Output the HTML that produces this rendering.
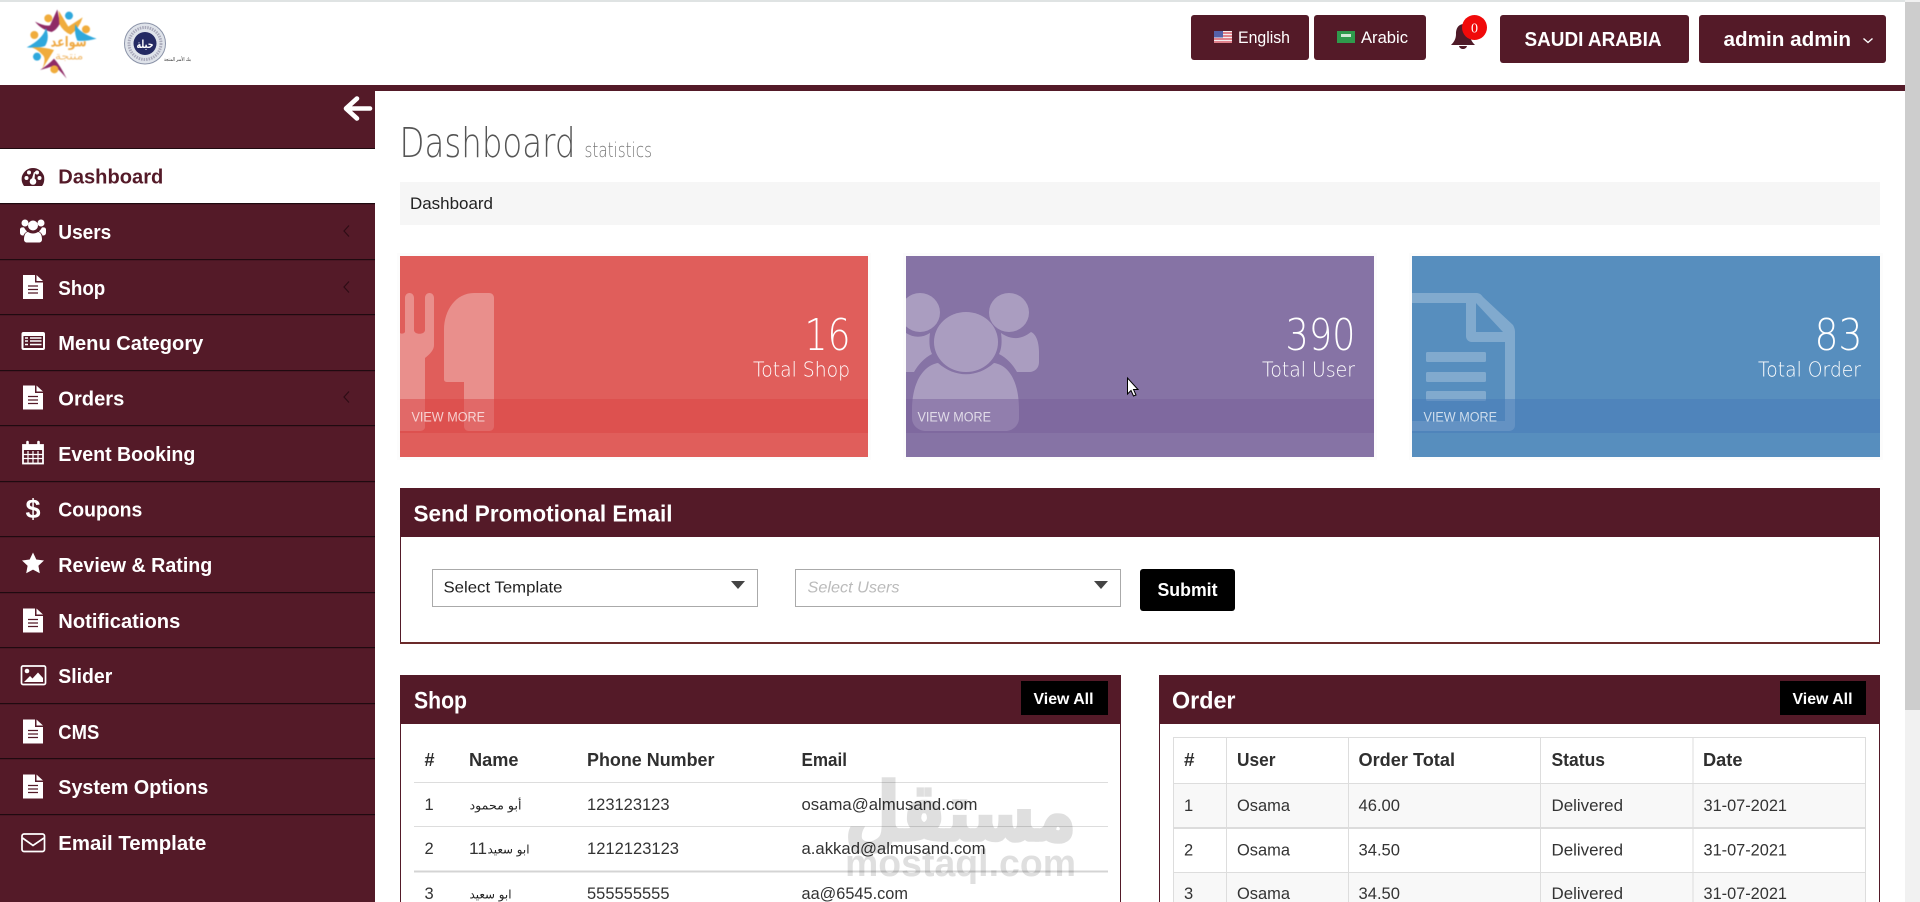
<!DOCTYPE html>
<html lang="en"><head><meta charset="utf-8"><title>Dashboard</title>
<style>
html,body{margin:0;padding:0;background:#fff;overflow:hidden;width:1920px;height:902px}
svg{display:block;position:absolute;left:0;top:0}
text{font-family:"Liberation Sans","DejaVu Sans",sans-serif;white-space:pre}
.side{font-size:20.5px;font-weight:700;fill:#fff}
.lt{font-family:"DejaVu Sans ExtraLight","DejaVu Sans","Liberation Sans",sans-serif;font-weight:200}
.h{font-size:18px;font-weight:700;fill:#2f2f2f}
.c{font-size:16.5px;fill:#333}
.ar{font-family:"DejaVu Sans","Liberation Serif",serif;font-size:12px;fill:#222}
.vm{font-size:13.5px;fill:#fff;fill-opacity:.72}
</style></head><body>
<svg width="1920" height="902" viewBox="0 0 1920 902" xmlns="http://www.w3.org/2000/svg">
<rect width="1920" height="902" fill="#fff"/>
<rect width="1920" height="2" fill="#dfe3e3"/>

<!-- logos -->
<g transform="scale(.3333)" style="filter:blur(1.2px)">
<path d="M105 65Q135 80 150 76L172 28 180 70Q170 90 155 96Q125 90 105 65Z" fill="#8f2a66"/>
<path d="M176 32L205 80 248 52Q238 85 212 104Q190 95 178 72Z" fill="#f0ac3c"/>
<path d="M226 72Q238 100 290 116Q255 125 232 122Q222 100 226 72Z" fill="#2fa8dc"/>
<path d="M138 84Q128 118 80 142Q115 145 135 138Q150 115 138 84Z" fill="#2fa8dc"/>
<path d="M95 142Q130 140 162 150Q150 170 126 208 140 175 128 165Q115 150 95 142Z" fill="#f0ac3c"/>
<path d="M120 210Q145 195 162 176Q180 195 200 236 175 205 160 198Q140 205 120 210Z" fill="#8f2a66"/>
<circle cx="145" cy="55" r="12" fill="#f0ac3c"/><circle cx="207" cy="47" r="12" fill="#2fa8dc"/>
<circle cx="258" cy="88" r="12" fill="#f0ac3c"/><circle cx="103" cy="105" r="12" fill="#f0ac3c"/>
<circle cx="111" cy="170" r="12" fill="#2fa8dc"/><circle cx="163" cy="208" r="12" fill="#f0ac3c"/>
<text x="152" y="140" font-size="42" font-weight="700" fill="#efaa45" textLength="108" lengthAdjust="spacingAndGlyphs" style="font-family:'DejaVu Sans',sans-serif">سواعد</text>
<text x="165" y="178" font-size="32" fill="#f0b96b" textLength="85" lengthAdjust="spacingAndGlyphs" style="font-family:'DejaVu Sans',sans-serif">منتجة</text>
</g>
<g style="filter:blur(.3px)">
<circle cx="145" cy="43.5" r="20.5" fill="#dfe3ea" stroke="#8b93a8" stroke-width="1"/>
<circle cx="145" cy="43.5" r="16" fill="none" stroke="#aab" stroke-width="3" stroke-dasharray="1.5 1"/>
<circle cx="145" cy="43.5" r="11.5" fill="#242a63"/>
<text x="136.500" y="48" font-size="11" font-weight="700" fill="#fff" textLength="17" lengthAdjust="spacingAndGlyphs" style="font-family:'DejaVu Sans',sans-serif">حيلة</text>
<text x="164" y="61" font-size="5" fill="#333" textLength="27" lengthAdjust="spacingAndGlyphs" style="font-family:'DejaVu Sans',sans-serif">بنك الأسر المنتجة</text>
</g>

<!-- header buttons -->
<rect x="1191" y="15" width="118" height="45" rx="3" fill="#541a28"/>
<rect x="1314" y="15" width="112" height="45" rx="3" fill="#541a28"/>
<rect x="1500" y="15" width="189" height="48" rx="3" fill="#541a28"/>
<rect x="1699" y="15" width="187" height="48" rx="3" fill="#541a28"/>
<g>
<rect x="1214" y="31" width="18" height="12" fill="#f3eef0"/>
<path d="M1214 33h18M1214 36h18M1214 39h18M1214 42h18" stroke="#d95f6a" stroke-width="1.4"/>
<rect x="1214" y="31" width="9" height="6.5" fill="#5560a8"/>
</g>
<rect x="1337" y="31" width="18" height="12" fill="#2f9a4c"/>
<rect x="1341" y="34" width="10" height="3" fill="#cfe8d4"/>
<text x="1238" y="43" font-size="16.5" fill="#fff" textLength="52" lengthAdjust="spacingAndGlyphs">English</text>
<text x="1361" y="43" font-size="16.5" fill="#fff" textLength="47" lengthAdjust="spacingAndGlyphs">Arabic</text>
<text x="1524.5" y="46" font-size="20" font-weight="700" fill="#fff" textLength="137" lengthAdjust="spacingAndGlyphs">SAUDI ARABIA</text>
<text x="1723.5" y="46" font-size="20.5" font-weight="700" fill="#fff" textLength="127.500" lengthAdjust="spacingAndGlyphs">admin admin</text>
<path d="M1863.500 38.500l4.500 4 4.500-4" fill="none" stroke="#fff" stroke-width="1.400"/>
<path d="M1463 24C1457 25 1456 30 1456 34 1456 39 1454 42 1451 45H1475C1472 42 1470 39 1470 34 1470 30 1468 25 1463 24ZM1459 46C1460 50 1466 50 1467 46Z" fill="#4f1a28"/>
<circle cx="1474.5" cy="27.5" r="12.5" fill="#f00a0a"/>
<text x="1474.5" y="32.5" font-size="14" fill="#fff" text-anchor="middle" style="font-family:'Liberation Serif',serif">0</text>

<!-- top rule + sidebar -->
<rect x="0" y="85" width="1905" height="6" fill="#541a28"/>
<rect x="0" y="85" width="375" height="817" fill="#541a28"/>
<path d="M370 108.500H349M357 98.500L346 108.500 357 118.500" fill="none" stroke="#fff" stroke-width="4.600" stroke-linecap="round" stroke-linejoin="round"/>
<rect x="0" y="149" width="375" height="54" fill="#fff"/>
<g fill="#1f0a10">
<rect y="148" width="375" height="1"/><rect y="203" width="375" height="1.200"/><rect y="259" width="375" height="1.200"/>
<rect y="314" width="375" height="1.200"/><rect y="370" width="375" height="1.200"/><rect y="425" width="375" height="1.200"/>
<rect y="481" width="375" height="1.200"/><rect y="536" width="375" height="1.200"/><rect y="592" width="375" height="1.200"/>
<rect y="647" width="375" height="1.200"/><rect y="703" width="375" height="1.200"/><rect y="758" width="375" height="1.200"/>
<rect y="814" width="375" height="1.200"/>
</g>
<text x="58.300" y="183.500" class="side" style="fill:#541a28" textLength="105" lengthAdjust="spacingAndGlyphs">Dashboard</text>
<text x="58.300" y="239" class="side" textLength="53" lengthAdjust="spacingAndGlyphs">Users</text>
<text x="58.300" y="295" class="side" textLength="47" lengthAdjust="spacingAndGlyphs">Shop</text>
<text x="58.300" y="350" class="side" textLength="145" lengthAdjust="spacingAndGlyphs">Menu Category</text>
<text x="58.300" y="405.500" class="side" textLength="66" lengthAdjust="spacingAndGlyphs">Orders</text>
<text x="58.300" y="461" class="side" textLength="137" lengthAdjust="spacingAndGlyphs">Event Booking</text>
<text x="58.300" y="516.500" class="side" textLength="84" lengthAdjust="spacingAndGlyphs">Coupons</text>
<text x="58.300" y="572" class="side" textLength="154" lengthAdjust="spacingAndGlyphs">Review &amp; Rating</text>
<text x="58.300" y="628" class="side" textLength="122" lengthAdjust="spacingAndGlyphs">Notifications</text>
<text x="58.300" y="683" class="side" textLength="54" lengthAdjust="spacingAndGlyphs">Slider</text>
<text x="58.300" y="739" class="side" textLength="41" lengthAdjust="spacingAndGlyphs">CMS</text>
<text x="58.300" y="794" class="side" textLength="150" lengthAdjust="spacingAndGlyphs">System Options</text>
<text x="58.300" y="850" class="side" textLength="148" lengthAdjust="spacingAndGlyphs">Email Template</text>
<path d="M349 225.500l-5 5.500 5 5.500M349 281.500l-5 5.500 5 5.500M349 391.500l-5 5.500 5 5.500" fill="none" stroke="#2e0c15" stroke-width="1.200"/>

<!-- sidebar icons -->
<path d="M24 186C21 182 21.500 178 22 176 24 171 28 168 33 168 38 168 42 171 44 176 44.500 179 44.500 183 42 186Z" fill="#4f1a28"/>
<g fill="#fff"><circle cx="26.500" cy="178" r="2"/><circle cx="29" cy="172.500" r="2"/><circle cx="37" cy="172.500" r="2"/><circle cx="39.500" cy="178" r="2"/><circle cx="33" cy="181.500" r="3.300"/><path d="M31.500 180L34 172 35 172.300 34.500 181Z"/></g>

<g fill="#fff">
<circle cx="25" cy="223" r="3.500"/><circle cx="41" cy="223" r="3.500"/><circle cx="33" cy="225.500" r="5"/>
<path d="M20 229.500C20 227.500 22 227 24 227.500 25 229 26 230.500 27 231.500 25 232.500 24 234 23.500 235.500 21 235.500 20 234.500 20 232.500Z"/>
<path d="M46 229.500C46 227.500 44 227 42 227.500 41 229 40 230.500 39 231.500 41 232.500 42 234 42.500 235.500 45 235.500 46 234.500 46 232.500Z"/>
<path d="M24 239.500C24 234.500 26 232 28 232 31 234 35 234 38 232 40 232 42 234.500 42 239.500 42 241.500 40.500 242.500 39 242.500H27C25.500 242.500 24 241.500 24 239.500Z"/>
</g>

<path d="M23 275H35V282.500H43V299H23Z" fill="#fff"/><path d="M36.500 275L43 281H36.500Z" fill="#fff"/><path d="M28 286h10M28 289.500h10M28 293h10" stroke="#541a28" stroke-width="1.300"/>
<path d="M23 385.500H35V393H43V409.500H23Z" fill="#fff"/><path d="M36.500 385.500L43 391.500H36.500Z" fill="#fff"/><path d="M28 396.500h10M28 400h10M28 403.500h10" stroke="#541a28" stroke-width="1.300"/>
<path d="M23 608.500H35V616H43V632.500H23Z" fill="#fff"/><path d="M36.500 608.500L43 614.500H36.500Z" fill="#fff"/><path d="M28 619.500h10M28 623h10M28 626.500h10" stroke="#541a28" stroke-width="1.300"/>
<path d="M23 719.500H35V727H43V743.500H23Z" fill="#fff"/><path d="M36.500 719.500L43 725.500H36.500Z" fill="#fff"/><path d="M28 730.500h10M28 734h10M28 737.500h10" stroke="#541a28" stroke-width="1.300"/>
<path d="M23 774.500H35V782H43V798.500H23Z" fill="#fff"/><path d="M36.500 774.500L43 780.500H36.500Z" fill="#fff"/><path d="M28 785.500h10M28 789h10M28 792.500h10" stroke="#541a28" stroke-width="1.300"/>

<rect x="21.500" y="332" width="23.500" height="18" rx="2" fill="#fff"/>
<rect x="23.500" y="336" width="19.500" height="12" fill="#541a28"/>
<path d="M25 338h3M25 341h3M25 344.500h3M30 338h11.500M30 341h11.500M30 344.500h11.500" stroke="#fff" stroke-width="1.600"/>

<rect x="23" y="445" width="20" height="18.500" fill="none" stroke="#fff" stroke-width="1.800"/>
<rect x="23" y="445" width="20" height="5" fill="#fff"/>
<path d="M28 451V463M33 451V463M38 451V463M23 454.500H43M23 458.500H43" stroke="#fff" stroke-width="1.200"/>
<path d="M27.500 442v5M38.500 442v5" stroke="#fff" stroke-width="2.600" stroke-linecap="round"/>

<text x="33" y="518" font-size="27" font-weight="700" fill="#fff" text-anchor="middle">$</text>
<path d="M33 552.500L36.300 559.500 44 560.500 38.400 565.800 39.800 573.300 33 569.600 26.200 573.300 27.600 565.800 22 560.500 29.700 559.500Z" fill="#fff"/>

<rect x="21.500" y="666" width="24" height="18.500" rx="1.500" fill="none" stroke="#fff" stroke-width="1.700"/>
<circle cx="27" cy="671" r="2.300" fill="#fff"/>
<path d="M24 682L30 676 32.500 678.500 38 672.500 43 678V682Z" fill="#fff"/>

<rect x="22" y="834" width="22.500" height="17.500" rx="2" fill="none" stroke="#fff" stroke-width="1.700"/>
<path d="M22.500 838L33 845.500 44 838" fill="none" stroke="#fff" stroke-width="1.700"/>

<!-- title -->
<text x="399.500" y="157" class="lt" font-size="41" fill="#555" textLength="176" lengthAdjust="spacingAndGlyphs">Dashboard</text>
<text x="584.500" y="157" class="lt" font-size="20" fill="#777" textLength="67.500" lengthAdjust="spacingAndGlyphs">statistics</text>
<rect x="400" y="182" width="1480" height="43" fill="#f6f6f6"/>
<text x="410" y="209" font-size="16.500" fill="#222" textLength="83" lengthAdjust="spacingAndGlyphs">Dashboard</text>

<!-- stat cards -->
<rect x="397" y="253" width="474" height="207" fill="#000" opacity=".012"/>
<rect x="903" y="253" width="474" height="207" fill="#000" opacity=".012"/>
<rect x="1409" y="253" width="474" height="207" fill="#000" opacity=".012"/>
<rect x="400" y="256" width="468" height="201" fill="#e05e5b"/>
<g fill="#fff" opacity=".3">
<path d="M400 293V333C401 334 404 334 405 332V298C405 295 407 293 409.500 293 412 293 414 295 414 298V330C414 335 425 335 425 330V298C425 295 427 293 429.500 293 432 293 434 295 434 298V345C434 350 430 354 425 358V427C425 429 423 431 420 431H400Z"/>
<path d="M494 298V426C494 429 492 431 489 431H469C466 431 464 429 464 426V382H447C445 382 444 381 444 379V330C444 310 456 293 474 293H489C492 293 494 295 494 298Z"/>
</g>
<rect x="400" y="399" width="468" height="34" fill="#d94444" opacity=".5"/>
<text x="804.500" y="350" class="lt" font-size="44" fill="#fff" textLength="46" lengthAdjust="spacingAndGlyphs">16</text>
<text x="753" y="376.500" class="lt" font-size="20" fill="#fff" textLength="97" lengthAdjust="spacingAndGlyphs">Total Shop</text>
<text x="411.500" y="421.500" class="vm" textLength="73.500" lengthAdjust="spacingAndGlyphs">VIEW MORE</text>

<rect x="906" y="256" width="468" height="201" fill="#8673a5"/>
<clipPath id="cp"><rect x="906" y="256" width="468" height="201"/></clipPath>
<g fill="#fff" opacity=".3" clip-path="url(#cp)">
<ellipse cx="966" cy="342" rx="32" ry="30"/>
<path d="M912 410C912 380 925 365 938 363 955 378 977 378 994 363 1008 365 1019 380 1019 410V418C1019 426 1012 431 1005 431H926C919 431 912 426 912 418Z"/>
<ellipse cx="1009" cy="312.500" rx="20" ry="19.500"/>
<ellipse cx="920" cy="312.500" rx="20" ry="19.500"/>
<path d="M1001 333C1011 340 1021 340 1031 332 1036 334 1039 342 1039 352V362C1039 368 1035 372 1029 372H1017C1013 365 1007 358 999 354 1002 348 1002 340 1001 333Z"/>
<path d="M906 333V372H914C918 365 924 358 932 354 929 348 929 340 930 333 922 338 914 338 906 333Z"/>
</g>
<rect x="906" y="399" width="468" height="34" fill="#785f99" opacity=".5"/>
<text x="1285.500" y="350" class="lt" font-size="44" fill="#fff" textLength="70" lengthAdjust="spacingAndGlyphs">390</text>
<text x="1262" y="376.500" class="lt" font-size="20" fill="#fff" textLength="93" lengthAdjust="spacingAndGlyphs">Total User</text>
<text x="917.500" y="421.500" class="vm" textLength="73.500" lengthAdjust="spacingAndGlyphs">VIEW MORE</text>

<rect x="1412" y="256" width="468" height="201" fill="#578ebe"/>
<g fill="#fff" opacity=".25">
<path d="M1412 293H1476C1479 293 1481 294 1483 297L1513 325C1514 327 1515 329 1515 332V425C1515 429 1512 431 1509 431H1412V421H1505V342H1472C1468 342 1466 339 1466 336V303H1412ZM1476 303V332H1503Z" fill-rule="evenodd"/>
<rect x="1426" y="352" width="60" height="10" rx="1.500"/>
<rect x="1426" y="372" width="60" height="10" rx="1.500"/>
<rect x="1426" y="391" width="60" height="10" rx="1.500"/>
</g>
<rect x="1412" y="399" width="468" height="34" fill="#477ab8" opacity=".5"/>
<text x="1814.500" y="350" class="lt" font-size="44" fill="#fff" textLength="48" lengthAdjust="spacingAndGlyphs">83</text>
<text x="1758" y="376.500" class="lt" font-size="20" fill="#fff" textLength="103" lengthAdjust="spacingAndGlyphs">Total Order</text>
<text x="1423.500" y="421.500" class="vm" textLength="73.500" lengthAdjust="spacingAndGlyphs">VIEW MORE</text>

<!-- cursor -->
<path d="M1127.500 378V394L1131 390.500 1133.500 396 1136 395 1133.500 389.500 1138 389.500Z" fill="#fff" stroke="#000" stroke-width="1"/>

<!-- promo panel -->
<rect x="400.500" y="488.500" width="1479" height="154.500" fill="#fff" stroke="#541a28" stroke-width="1"/>
<rect x="400" y="642" width="1480" height="2" fill="#6b2a2a"/>
<rect x="400" y="488" width="1480" height="49" fill="#541a28"/>
<text x="413.500" y="521.500" font-size="23.500" font-weight="700" fill="#fff" textLength="259" lengthAdjust="spacingAndGlyphs">Send Promotional Email</text>
<rect x="432.500" y="569.500" width="325" height="37" fill="#fff" stroke="#aaa"/>
<text x="443.500" y="592.500" font-size="16" fill="#222" textLength="119" lengthAdjust="spacingAndGlyphs">Select Template</text>
<path d="M731 581H745L738 589Z" fill="#444"/>
<rect x="795.500" y="569.500" width="325" height="37" fill="#fff" stroke="#aaa"/>
<text x="807.500" y="592.500" font-size="16" font-style="italic" fill="#bbb" textLength="92" lengthAdjust="spacingAndGlyphs">Select Users</text>
<path d="M1094 581H1108L1101 589Z" fill="#444"/>
<rect x="1140" y="569" width="95" height="42" rx="3" fill="#000"/>
<text x="1157.500" y="596" font-size="18" font-weight="700" fill="#fff" textLength="60" lengthAdjust="spacingAndGlyphs">Submit</text>

<!-- shop panel -->
<rect x="400.500" y="675.500" width="720" height="240" fill="#fff" stroke="#541a28" stroke-width="1"/>
<rect x="400" y="675" width="721" height="49" fill="#541a28"/>
<text x="414" y="708.500" font-size="24" font-weight="700" fill="#fff" textLength="53" lengthAdjust="spacingAndGlyphs">Shop</text>
<rect x="1021" y="681" width="87" height="34" fill="#000"/>
<text x="1033.500" y="704" font-size="16" font-weight="700" fill="#fff" textLength="60" lengthAdjust="spacingAndGlyphs">View All</text>
<text x="424.500" y="766" class="h" textLength="10" lengthAdjust="spacingAndGlyphs">#</text>
<text x="469" y="766" class="h" textLength="49.500" lengthAdjust="spacingAndGlyphs">Name</text>
<text x="587" y="766" class="h" textLength="127.500" lengthAdjust="spacingAndGlyphs">Phone Number</text>
<text x="801.500" y="766" class="h" textLength="45.500" lengthAdjust="spacingAndGlyphs">Email</text>
<rect x="414" y="782" width="694" height="1" fill="#ddd"/>
<rect x="414" y="826" width="694" height="1" fill="#ddd"/>
<rect x="414" y="870.500" width="694" height="2" fill="#d4d4d4"/>
<text x="424.500" y="810" class="c">1</text>
<text x="469.500" y="809.500" class="ar" textLength="52" lengthAdjust="spacingAndGlyphs">أبو محمود</text>
<text x="587" y="810" class="c" textLength="82.500" lengthAdjust="spacingAndGlyphs">123123123</text>
<text x="801.500" y="810" class="c" textLength="176" lengthAdjust="spacingAndGlyphs">osama@almusand.com</text>
<text x="424.500" y="854" class="c">2</text>
<text x="469" y="854" class="c" textLength="18" lengthAdjust="spacingAndGlyphs">11</text>
<text x="487.500" y="853.500" class="ar" textLength="42" lengthAdjust="spacingAndGlyphs">ابو سعيد</text>
<text x="587" y="854" class="c" textLength="92" lengthAdjust="spacingAndGlyphs">1212123123</text>
<text x="801.500" y="854" class="c" textLength="184" lengthAdjust="spacingAndGlyphs">a.akkad@almusand.com</text>
<text x="424.500" y="899" class="c">3</text>
<text x="469.500" y="898.500" class="ar" textLength="42" lengthAdjust="spacingAndGlyphs">ابو سعيد</text>
<text x="587" y="899" class="c" textLength="82.500" lengthAdjust="spacingAndGlyphs">555555555</text>
<text x="801.500" y="899" class="c" textLength="106.500" lengthAdjust="spacingAndGlyphs">aa@6545.com</text>

<!-- order panel -->
<rect x="1159.500" y="675.500" width="720" height="240" fill="#fff" stroke="#541a28" stroke-width="1"/>
<rect x="1159" y="675" width="721" height="49" fill="#541a28"/>
<text x="1172" y="708.500" font-size="24" font-weight="700" fill="#fff" textLength="63.500" lengthAdjust="spacingAndGlyphs">Order</text>
<rect x="1780" y="681" width="86" height="34" fill="#000"/>
<text x="1792.500" y="704" font-size="16" font-weight="700" fill="#fff" textLength="60" lengthAdjust="spacingAndGlyphs">View All</text>
<rect x="1173.500" y="783" width="692" height="45" fill="#f8f8f8"/>
<rect x="1173.500" y="873" width="692" height="30" fill="#f8f8f8"/>
<g fill="none" stroke="#ddd" stroke-width="1">
<path d="M1173.500 920V737.500H1865.500V920M1226.500 737V920M1348.500 737V920M1540.500 737V920M1693 737V920"/>
<path d="M1173 783.500H1866M1173 872.500H1866"/>
</g>
<rect x="1173" y="827" width="693" height="2" fill="#dcdcdc"/>
<text x="1184" y="766" class="h" textLength="10.500" lengthAdjust="spacingAndGlyphs">#</text>
<text x="1237" y="766" class="h" textLength="38.500" lengthAdjust="spacingAndGlyphs">User</text>
<text x="1358.500" y="766" class="h" textLength="96.500" lengthAdjust="spacingAndGlyphs">Order Total</text>
<text x="1551.500" y="766" class="h" textLength="53.500" lengthAdjust="spacingAndGlyphs">Status</text>
<text x="1703" y="766" class="h" textLength="39.500" lengthAdjust="spacingAndGlyphs">Date</text>
<text x="1184" y="811" class="c">1</text>
<text x="1237" y="811" class="c" textLength="53" lengthAdjust="spacingAndGlyphs">Osama</text>
<text x="1358.500" y="811" class="c" textLength="41.500" lengthAdjust="spacingAndGlyphs">46.00</text>
<text x="1551.500" y="811" class="c" textLength="71.500" lengthAdjust="spacingAndGlyphs">Delivered</text>
<text x="1703.500" y="811" class="c" textLength="83.500" lengthAdjust="spacingAndGlyphs">31-07-2021</text>
<text x="1184" y="855.500" class="c">2</text>
<text x="1237" y="855.500" class="c" textLength="53" lengthAdjust="spacingAndGlyphs">Osama</text>
<text x="1358.500" y="855.500" class="c" textLength="41.500" lengthAdjust="spacingAndGlyphs">34.50</text>
<text x="1551.500" y="855.500" class="c" textLength="71.500" lengthAdjust="spacingAndGlyphs">Delivered</text>
<text x="1703.500" y="855.500" class="c" textLength="83.500" lengthAdjust="spacingAndGlyphs">31-07-2021</text>
<text x="1184" y="899" class="c">3</text>
<text x="1237" y="899" class="c" textLength="53" lengthAdjust="spacingAndGlyphs">Osama</text>
<text x="1358.500" y="899" class="c" textLength="41.500" lengthAdjust="spacingAndGlyphs">34.50</text>
<text x="1551.500" y="899" class="c" textLength="71.500" lengthAdjust="spacingAndGlyphs">Delivered</text>
<text x="1703.500" y="899" class="c" textLength="83.500" lengthAdjust="spacingAndGlyphs">31-07-2021</text>

<!-- watermark -->
<text x="845" y="840" font-size="80" font-weight="700" fill="#000" stroke="#000" stroke-width="3.500" opacity=".12" textLength="231" lengthAdjust="spacingAndGlyphs" style="font-family:'DejaVu Sans',sans-serif">مستقل</text>
<text x="845" y="876" font-size="38" font-weight="700" fill="#000" opacity=".12" textLength="231" lengthAdjust="spacingAndGlyphs">mostaql.com</text>

<!-- scrollbar -->
<rect x="1905" y="0" width="15" height="902" fill="#f1f1f1"/>
<rect x="1905" y="2" width="15" height="708" fill="#cdcdcd"/>
</svg>
</body></html>
